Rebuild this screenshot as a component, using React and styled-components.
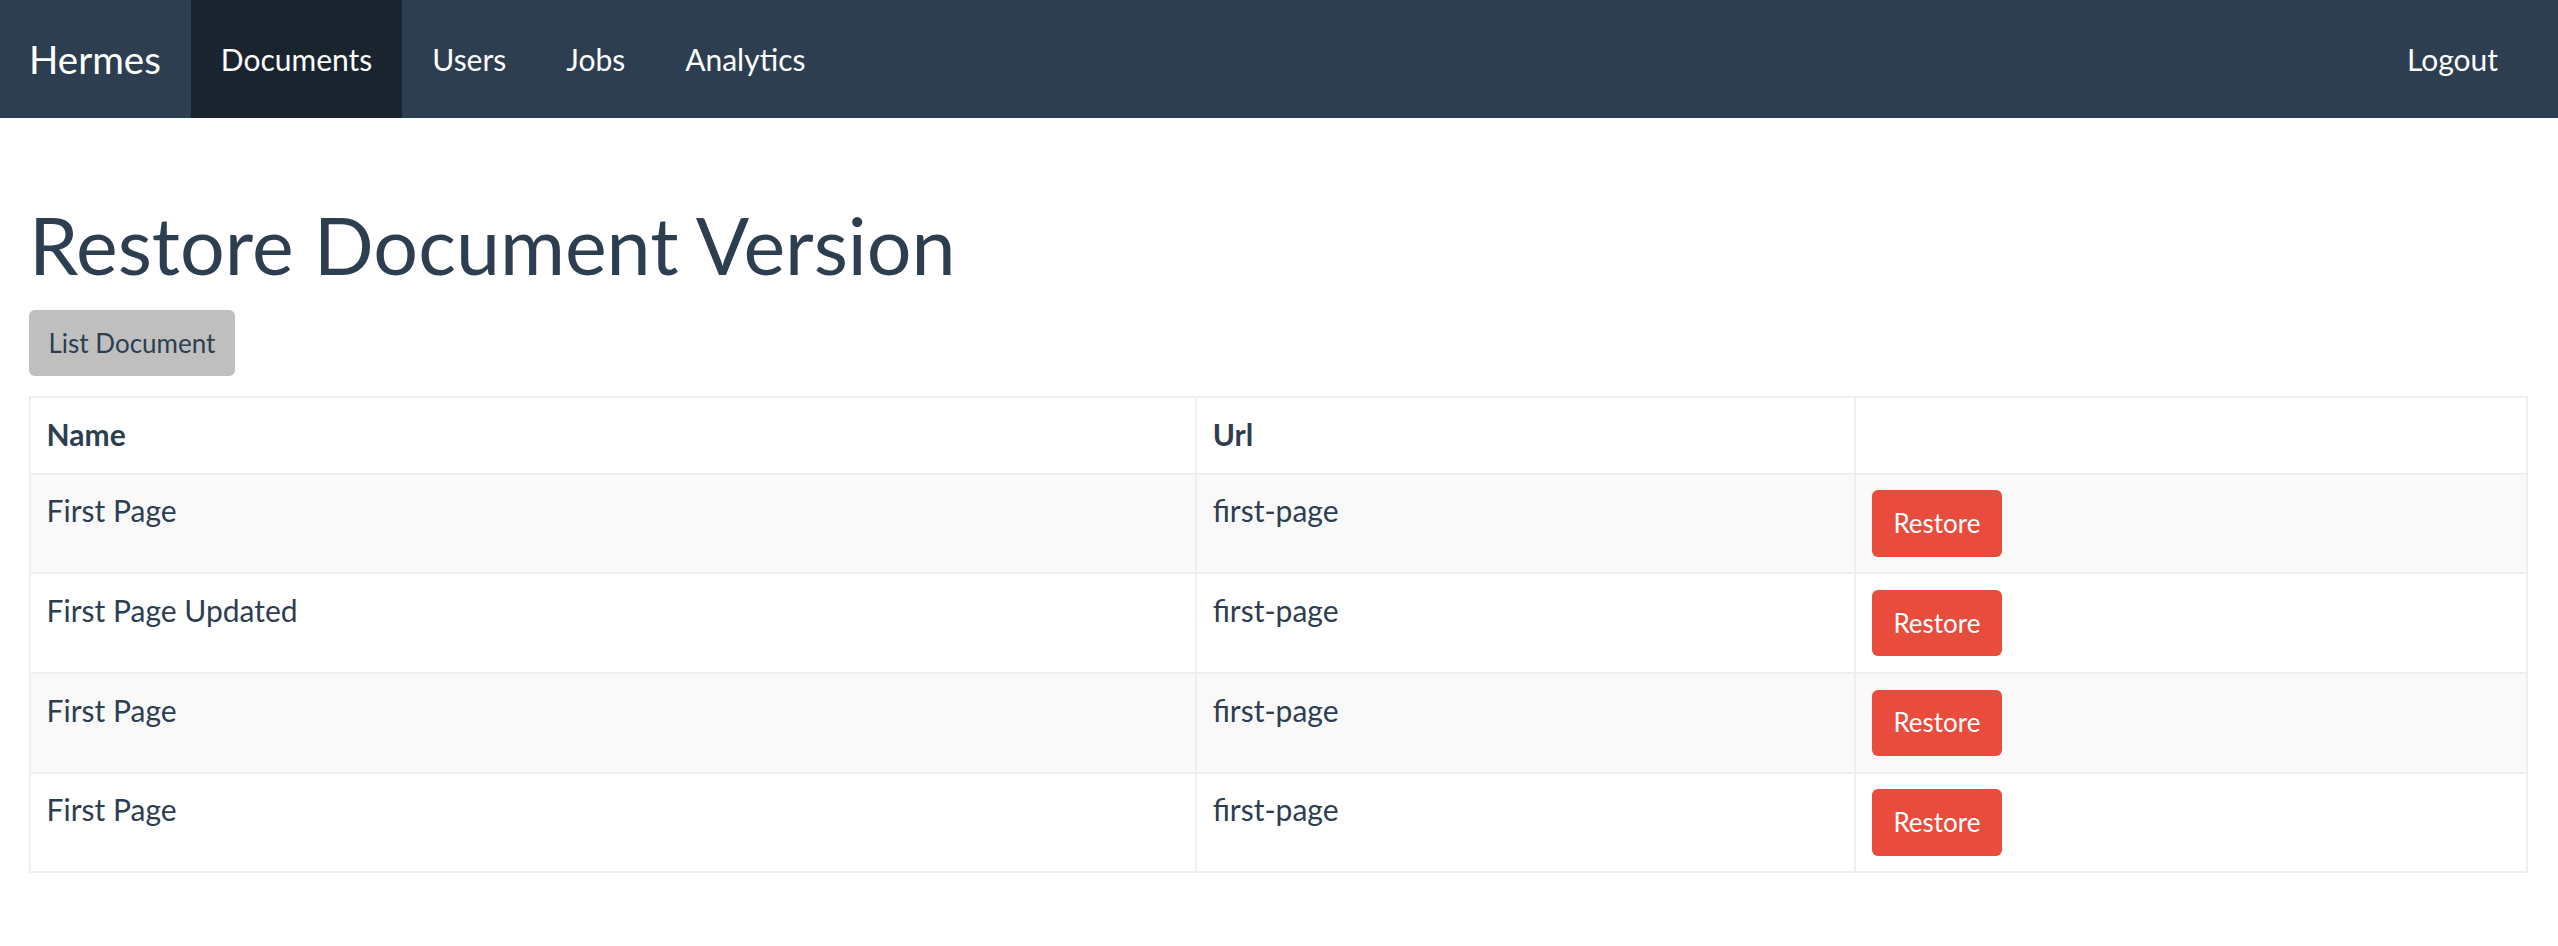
import React from "react";
import styled, { createGlobalStyle } from "styled-components";

const Global = createGlobalStyle`
  html, body { margin: 0; padding: 0; background: #fff; }
  body {
    font-family: Lato, "Open Sans", "Liberation Sans", sans-serif;
    color: #2c3e50;
    font-size: 30px;
    line-height: 41.8px;
  }
  * { box-sizing: border-box; }
`;

const Navbar = styled.nav`
  display: flex;
  align-items: stretch;
  height: 118px;
  background: #2c3e50;
  padding-right: 30px;
`;

const Brand = styled.a`
  display: block;
  padding: 0 30px 0 29px;
  font-size: 38.5px;
  line-height: 118px;
  color: #fff;
  text-decoration: none;
`;

const NavItem = styled.a`
  display: block;
  padding: 0 30px;
  font-size: 30px;
  line-height: 118px;
  color: #fff;
  text-decoration: none;
  background: ${(p) => (p.$active ? "#1a242f" : "transparent")};
  margin-left: ${(p) => (p.$right ? "auto" : "0")};
`;

const Main = styled.main`
  padding: 42px 30px 0 29px;
`;

const Title = styled.h1`
  margin: 42px 0 22px;
  font-size: 79px;
  font-weight: 400;
  line-height: 86px;
  color: #2c3e50;
`;

const Button = styled.button`
  display: inline-block;
  font-family: inherit;
  font-size: 26px;
  line-height: 39px;
  padding: 11.7px ${(p) => (p.$danger ? "19.5px" : "17.5px")};
  border: 2px solid transparent;
  border-radius: 6px;
  cursor: pointer;
  background: ${(p) => (p.$danger ? "#e74c3c" : "#bfbfbf")};
  color: ${(p) => (p.$danger ? "#fff" : "#2c3e50")};
`;

const Table = styled.table`
  width: 100%;
  margin-top: 19.5px;
  border-collapse: collapse;
  border: 2px solid #ecf0f1;
`;

const Th = styled.th`
  text-align: left;
  font-weight: 700;
  padding: 16.6px 15.6px;
  line-height: 41.8px;
  border: 2px solid #ecf0f1;
  vertical-align: bottom;
  width: ${(p) => p.$w || "auto"};
`;

const Row = styled.tr`
  background: ${(p) => (p.$striped ? "#f9f9f9" : "#fff")};
`;

const Td = styled.td`
  padding: 15.6px;
  line-height: 41.8px;
  border: 2px solid #ecf0f1;
  vertical-align: top;
`;

const rows = [
  { name: "First Page", url: "first-page" },
  { name: "First Page Updated", url: "first-page" },
  { name: "First Page", url: "first-page" },
  { name: "First Page", url: "first-page" },
];

export default function App() {
  return (
    <>
      <Global />
      <Navbar>
        <Brand href="#">Hermes</Brand>
        <NavItem href="#" $active>Documents</NavItem>
        <NavItem href="#">Users</NavItem>
        <NavItem href="#">Jobs</NavItem>
        <NavItem href="#">Analytics</NavItem>
        <NavItem href="#" $right>Logout</NavItem>
      </Navbar>
      <Main>
        <Title>Restore Document Version</Title>
        <Button>List Document</Button>
        <Table>
          <thead>
            <tr>
              <Th $w="46.7%">Name</Th>
              <Th $w="26.4%">Url</Th>
              <Th />
            </tr>
          </thead>
          <tbody>
            {rows.map((r, i) => (
              <Row key={i} $striped={i % 2 === 0}>
                <Td>{r.name}</Td>
                <Td>{r.url}</Td>
                <Td>
                  <Button $danger>Restore</Button>
                </Td>
              </Row>
            ))}
          </tbody>
        </Table>
      </Main>
    </>
  );
}
